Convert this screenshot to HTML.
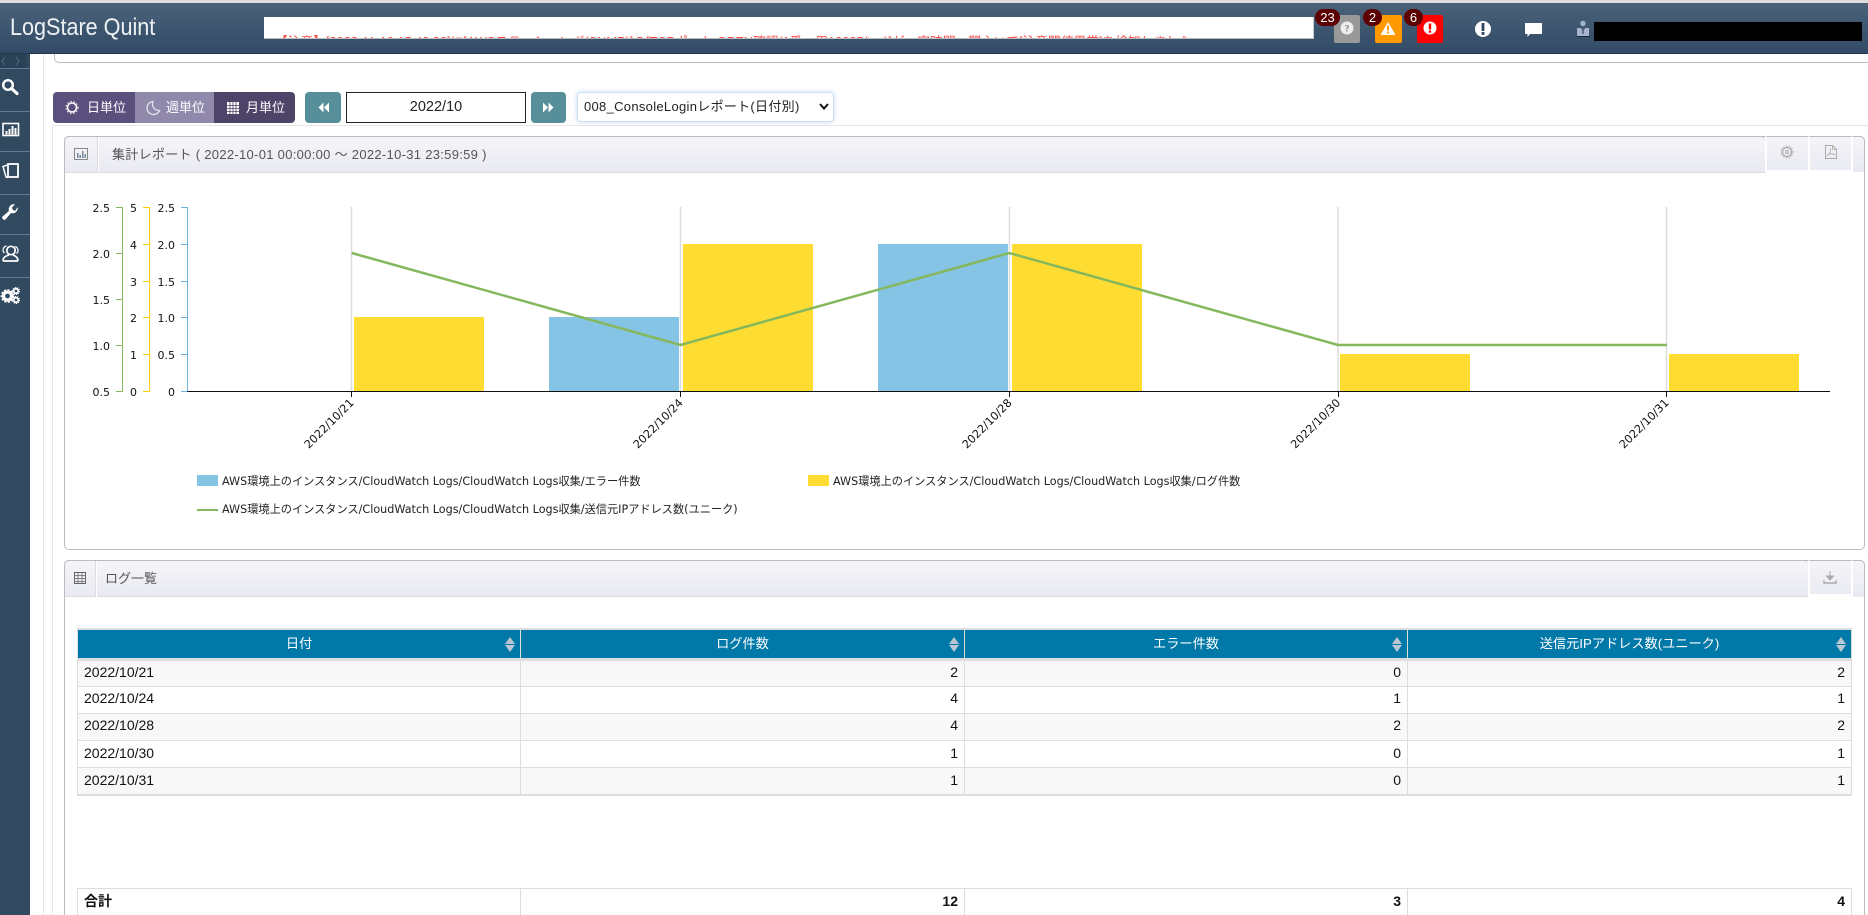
<!DOCTYPE html>
<html lang="ja"><head><meta charset="utf-8"><title>LogStare Quint</title>
<style>
html,body{margin:0;padding:0;width:1868px;height:915px;overflow:hidden;background:#fff}
body{position:relative;font-family:"Liberation Sans","Noto Sans CJK JP",sans-serif;font-size:13px;color:#222}
.a{position:absolute;box-sizing:border-box}
.hdr{left:0;top:0;width:1868px;height:54px;background:linear-gradient(#4a6279,#324b67);border-top:3px solid #ddd;border-bottom:1px solid #22384e}
.logo{left:10px;top:13px;font-size:24px;color:#eef2f5;line-height:30px;white-space:nowrap;transform:scaleX(.9);transform-origin:left center}
.tick{left:264px;top:17px;width:1050px;height:22px;background:#fff;border-bottom:1px solid #bbb;border-right:1px solid #ccc;overflow:hidden}
.tick span{position:absolute;left:11px;top:15px;font-size:12.75px;color:#f44;white-space:nowrap;line-height:20px}
.sq{top:15px;height:28px;border-radius:2px}
.bd{top:9px;height:17px;border-radius:9px;background:#5c0000;color:#fff;font-size:13px;line-height:17px;text-align:center}
.side{left:0;top:54px;width:30px;height:861px;background:#324a60}
.sl{left:0;width:30px;height:1px;background:#5d7c99}
.seg{top:92px;height:31px;color:#fff;font-size:13px;line-height:31px;white-space:nowrap}
.tb{top:92px;height:31px;width:36px;background:#568e99;border-radius:4px}
.pan{background:#fff;border:1px solid #bbb;border-radius:5px}
.ph{left:64px;background:linear-gradient(#f5f5f9,#e9e9f2);border-bottom:1px solid #ddd;border-top:1px solid #bbb;border-left:1px solid #bbb;border-radius:5px 5px 0 0}
.cell{background:linear-gradient(#f3f3f8,#ebebf3);border:2px solid #fff;border-top:1px solid #bbb}
svg text{font-family:"DejaVu Sans","Noto Sans CJK JP",sans-serif}
table{position:absolute;left:77px;width:1774px;border-collapse:collapse;table-layout:fixed;font-size:14px;color:#111}
td,th{box-sizing:border-box;padding:0 6px 3px;border:1px solid #ddd;overflow:hidden;white-space:nowrap}
th{background:#0078a8;color:#fff;font-weight:normal;font-size:13.2px;height:30px;position:relative;border-bottom:3px solid #ddd;border-top:2px solid #ddd;border-left-color:#ddd}
td{height:27.2px;text-align:right}
td:first-child{text-align:left}
tr.o td{background:#f8f8f8}
th i{position:absolute;right:5px;top:7px;width:0;height:0;border-left:5px solid transparent;border-right:5px solid transparent;border-bottom:7px solid #b9c7d2}
th b{position:absolute;right:5px;top:15px;width:0;height:0;border-left:5px solid transparent;border-right:5px solid transparent;border-top:7px solid #b9c7d2}
</style></head><body>

<!-- page frame -->
<div class="a" style="left:43px;top:54px;width:1px;height:861px;background:#e4e4e4"></div>
<div class="a" style="left:54px;top:40px;width:1830px;height:23px;border:1px solid #bbb;border-radius:5px"></div>
<div class="a" style="left:52px;top:125px;width:1830px;height:800px;border:1px solid #e6e6e6;border-right:0"></div>

<!-- header -->
<div class="a hdr"></div>
<div class="a logo">LogStare Quint</div>
<div class="a tick"><span>【注意】[2022-11-10 15:43:38]に[AWSステーションボ(SNMP)]の[TCPポート OPEN確認(1番　用10025/tcp)]が一定時間　開主いて[注意閾値異常]を検知しました</span></div>

<div class="a sq" style="left:1334px;width:26px;background:#999"></div>
<div class="a sq" style="left:1375px;width:27px;background:#f90"></div>
<div class="a sq" style="left:1417px;width:26px;background:#f00"></div>
<div class="a bd" style="left:1315px;width:25px">23</div>
<div class="a bd" style="left:1363px;width:19px">2</div>
<div class="a bd" style="left:1404px;width:19px">6</div>
<svg class="a" style="left:1300px;top:0" width="320" height="54" viewBox="0 0 320 54">
<circle cx="47" cy="28" r="6.5" fill="#eee"/><text x="47" y="31.5" font-size="9" font-weight="bold" text-anchor="middle" fill="#999">?</text>
<path d="M88 22l7.500 13h-15z" fill="#fff"/><rect x="87" y="25.500" width="2" height="5" fill="#f90"/><rect x="87" y="31.500" width="2" height="2" fill="#f90"/>
<circle cx="130" cy="28" r="6.5" fill="#fff"/><rect x="128.800" y="23.500" width="2.400" height="6" fill="#f00"/><rect x="128.800" y="30.500" width="2.400" height="2.200" fill="#f00"/>
<circle cx="183" cy="29" r="8" fill="#fff"/><rect x="181.600" y="23" width="2.800" height="8" fill="#2c4560"/><rect x="181.600" y="32" width="2.800" height="2.800" fill="#2c4560"/>
<path d="M225 23h17v11h-12l-2.500 3v-3h-2.500z" fill="#fff"/>
<circle cx="283" cy="23.500" r="2.700" fill="#a9b5cc"/><path d="M277 36v-8h4l2 5 2-5h4v8z" fill="#a9b5cc"/><path d="M282.500 28h1l.7 5-1.200 1.500-1.200-1.500z" fill="#5d6d85"/><rect x="277" y="36" width="13" height="1" fill="#1a2533"/>
<path d="M562 28h5l-2.500 3z" fill="#9fb0c0"/>
</svg>
<div class="a" style="left:1594px;top:22px;width:268px;height:19px;background:#000"></div>

<!-- sidebar -->
<div class="a side"></div>
<div class="a" style="left:0;top:54px;width:27px;height:14px;background:#2c4257"></div>
<svg class="a" style="left:0;top:54px" width="30" height="14"><path d="M5 3L2 7l3 4M16 3l3 4-3 4" fill="none" stroke="#4f6b85" stroke-width="1"/></svg>
<div class="a sl" style="top:68px"></div><div class="a sl" style="top:111px"></div><div class="a sl" style="top:151px"></div><div class="a sl" style="top:194px"></div><div class="a sl" style="top:234px"></div><div class="a sl" style="top:277px"></div>
<svg class="a" style="left:0;top:54px" width="30" height="260" viewBox="0 54 30 260">
<g fill="none" stroke="#fff">
<circle cx="8" cy="85" r="4.800" stroke-width="2.400"/><path d="M11.500 88.500l5.500 5" stroke-width="3.200" stroke-linecap="round"/>
<rect x="3" y="123.500" width="15.500" height="12" stroke-width="1.600"/>
<rect x="8" y="164" width="10" height="13" stroke-width="1.800"/><path d="M7.500 165l-4.500 1.500 3 10.500 2 .5" stroke-width="1.500"/>
<circle cx="11" cy="250.500" r="4.200" stroke-width="1.700"/><path d="M3 261c0-4 3-5 6-6M18 261c0-4-3-5-5-6M3 261h15" stroke-width="1.700"/><path d="M15 246.500a4 4 0 0 1 1.500 7" stroke-width="1.200"/><path d="M6.500 246a4 4 0 0 0-2 7" stroke-width="1.200"/>
</g>
<path d="M5.500 131h2v3.500h-2zM8.500 129h2v5.500h-2zM11.500 126h2v8.500h-2zM14.500 128h2v6.500h-2z" fill="#fff"/>
<path d="M17.500 207a5 5 0 0 1-6.500 6l-5.500 6.500a2.200 2.200 0 0 1-3-3l6.500-5.500a5 5 0 0 1 6-6.500l-3 3 .8 2.500 2.500.8z" fill="#fff"/>
<circle cx="7.500" cy="296" r="4" fill="none" stroke="#fff" stroke-width="3.200"/><circle cx="7.500" cy="296" r="6" fill="none" stroke="#fff" stroke-width="1.800" stroke-dasharray="2 1.500"/>
<circle cx="16" cy="291" r="2.300" fill="none" stroke="#fff" stroke-width="1.800"/><circle cx="16" cy="291" r="3.500" fill="none" stroke="#fff" stroke-width="1" stroke-dasharray="1.200 1"/>
<circle cx="16" cy="300" r="2.300" fill="none" stroke="#fff" stroke-width="1.800"/><circle cx="16" cy="300" r="3.500" fill="none" stroke="#fff" stroke-width="1" stroke-dasharray="1.200 1"/>
</svg>

<!-- toolbar -->
<div class="a seg" style="left:53px;width:82px;background:#5b4f7e;border-radius:4px 0 0 4px;padding-left:34px">日単位</div>
<div class="a seg" style="left:135px;width:79px;background:#9189ab;padding-left:31px">週単位</div>
<div class="a seg" style="left:214px;width:81px;background:#4e4368;border-radius:0 4px 4px 0;padding-left:32px">月単位</div>
<svg class="a" style="left:53px;top:92px" width="242" height="31" viewBox="53 92 242 31">
<circle cx="72" cy="107.500" r="4.500" fill="none" stroke="#fff" stroke-width="1.500"/>
<circle cx="72" cy="107.500" r="6" fill="none" stroke="#fff" stroke-width="1" stroke-dasharray="1.500 1.800"/>
<path d="M153 101.500a6.500 6.500 0 1 0 6.500 9 6.500 6.500 0 0 1-6.500-9z" fill="none" stroke="#e8e6ee" stroke-width="1.200"/>
<rect x="227" y="102" width="12" height="12" fill="#fff"/><path d="M227 105.500h12M227 108.500h12M227 111.500h12M230 102v12M233 102v12M236 102v12" stroke="#4e4368" stroke-width=".8"/>
</svg>
<div class="a tb" style="left:305px"></div>
<svg class="a" style="left:305px;top:92px" width="36" height="31"><path d="M18.500 10.500v10l-5-5zM24 10.500v10l-5-5z" fill="#fff"/></svg>
<div class="a" style="left:346px;top:92px;width:180px;height:31px;border:1px solid #222;text-align:center;line-height:29px;font-size:14.5px;color:#222">2022/10</div>
<div class="a tb" style="left:531px;width:35px"></div>
<svg class="a" style="left:531px;top:92px" width="35" height="31"><path d="M12 10.500v10l5-5zM17.500 10.500v10l5-5z" fill="#fff"/></svg>
<div class="a" style="left:577px;top:92px;width:257px;height:30px;background:#fff;border:1px solid #cfe0ee;border-radius:4px;box-shadow:0 0 5px #bcd8f0;line-height:28px;padding-left:6px;font-size:13px;letter-spacing:.3px;color:#222;white-space:nowrap">008_ConsoleLoginレポート(日付別)</div>
<svg class="a" style="left:818px;top:102px" width="12" height="10"><path d="M2 2l4 4.500L10 2" fill="none" stroke="#111" stroke-width="2"/></svg>

<!-- report panel -->
<div class="a pan" style="left:64px;top:136px;width:1801px;height:414px"></div>
<div class="a ph" style="top:136px;width:1702px;height:37px"></div>
<div class="a" style="left:1852px;top:136px;width:13px;height:36px;background:linear-gradient(#f5f5f9,#e9e9f2);border-top:1px solid #bbb;border-right:1px solid #bbb;border-radius:0 5px 0 0;box-sizing:border-box"></div>
<div class="a" style="left:97px;top:137px;width:2px;height:35px;background:linear-gradient(90deg,#ddd 50%,#fff 50%)"></div>
<svg class="a" style="left:74px;top:147px" width="14" height="14"><rect x=".5" y="1.500" width="13" height="11" fill="none" stroke="#888"/><path d="M3 6h1.500v5H3zM5.500 8H7v3H5.500zM8 4h1.500v7H8zM10.500 7H12v4h-1.500z" fill="#789"/></svg>
<div class="a" style="left:112px;top:146px;font-size:13px;line-height:18px;color:#555;white-space:nowrap;letter-spacing:.3px">集計レポート ( 2022-10-01 00:00:00 ～ 2022-10-31 23:59:59 )</div>
<div class="a cell" style="left:1765px;top:136px;width:45px;height:36px"></div>
<div class="a cell" style="left:1808px;top:136px;width:45px;height:36px"></div>
<svg class="a" style="left:1780px;top:145px" width="14" height="14"><circle cx="7" cy="7" r="4.500" fill="none" stroke="#a5a5a8" stroke-width="1.200"/><circle cx="7" cy="7" r="6" fill="none" stroke="#aaa" stroke-width="1" stroke-dasharray="1.500 1.500"/><circle cx="7" cy="7" r="1.500" fill="none" stroke="#aaa"/></svg>
<svg class="a" style="left:1825px;top:145px" width="12" height="14"><path d="M.5.500h7l4 4v9H.500z" fill="none" stroke="#aaa"/><path d="M7.500.5v4h4M2 11c3-2 4-5 3.500-8M3 9.500c2-1 5-1 7 .5" fill="none" stroke="#b5aaa0" stroke-width=".8"/></svg>

<!-- chart -->
<svg class="a" style="left:0;top:0" width="1868" height="540" viewBox="0 0 1868 540">
<g stroke="#ddd" stroke-width="1.500"><path d="M351.500 207V391M680.500 207V391M1009.500 207V391M1338 207V391M1666.500 207V391"/></g>
<g fill="#85c4e4"><rect x="549" y="317" width="130" height="74"/><rect x="878" y="244" width="130" height="147"/></g>
<g fill="#fedc32"><rect x="354" y="317" width="130" height="74"/><rect x="683" y="244" width="130" height="147"/><rect x="1012" y="244" width="130" height="147"/><rect x="1340" y="354" width="130" height="37"/><rect x="1669" y="354" width="130" height="37"/></g>
<polyline points="351.700,253 680.500,345 1009.300,253 1338,345 1666.900,345" fill="none" stroke="#85b85d" stroke-width="2.500"/>
<path d="M187 391.500H1830M351.500 391v6M680.500 391v6M1009.500 391v6M1338.500 391v6M1666.500 391v6" stroke="#111" stroke-width="1" fill="none"/>
<path d="M116 207.500h6.500V391.500H116M116 253.500h6.500M116 299.500h6.500M116 345.500h6.500" fill="none" stroke="#85b85d"/>
<path d="M143 207.500h6.500V391.500H143M143 244.500h6.500M143 281.500h6.500M143 317.500h6.500M143 354.500h6.500" fill="none" stroke="#fc0"/>
<path d="M181 207.500h6.500V391M181 244.500h6.500M181 281.500h6.500M181 317.500h6.500M181 354.500h6.500M181 391.500h6.500" fill="none" stroke="#6cb3dd"/>
<g font-size="11" fill="#111" text-anchor="end">
<text x="110" y="212">2.5</text><text x="110" y="258">2.0</text><text x="110" y="304">1.5</text><text x="110" y="350">1.0</text><text x="110" y="396">0.5</text>
<text x="137" y="212">5</text><text x="137" y="249">4</text><text x="137" y="286">3</text><text x="137" y="322">2</text><text x="137" y="359">1</text><text x="137" y="396">0</text>
<text x="175" y="212">2.5</text><text x="175" y="249">2.0</text><text x="175" y="286">1.5</text><text x="175" y="322">1.0</text><text x="175" y="359">0.5</text><text x="175" y="396">0</text>
<text transform="translate(354.500,403.500) rotate(-45)" font-size="11.2">2022/10/21</text>
<text transform="translate(683.500,403.500) rotate(-45)" font-size="11.2">2022/10/24</text>
<text transform="translate(1012.500,403.500) rotate(-45)" font-size="11.2">2022/10/28</text>
<text transform="translate(1341,403.500) rotate(-45)" font-size="11.2">2022/10/30</text>
<text transform="translate(1669.500,403.500) rotate(-45)" font-size="11.2">2022/10/31</text>
</g>
<rect x="197" y="475" width="21" height="11" fill="#85c4e4"/>
<rect x="808" y="475" width="21" height="11" fill="#fedc32"/>
<rect x="197" y="509" width="21" height="2" fill="#85b85d"/>
<g font-size="11.2" fill="#222">
<text x="222" y="485">AWS環境上のインスタンス/CloudWatch Logs/CloudWatch Logs収集/エラー件数</text>
<text x="833" y="485">AWS環境上のインスタンス/CloudWatch Logs/CloudWatch Logs収集/ログ件数</text>
<text x="222" y="513">AWS環境上のインスタンス/CloudWatch Logs/CloudWatch Logs収集/送信元IPアドレス数(ユニーク)</text>
</g>
</svg>

<!-- log panel -->
<div class="a pan" style="left:64px;top:560px;width:1801px;height:400px"></div>
<div class="a ph" style="top:560px;width:1744px;height:37px"></div>
<div class="a" style="left:1852px;top:560px;width:13px;height:37px;background:linear-gradient(#f5f5f9,#e9e9f2);border-top:1px solid #bbb;border-right:1px solid #bbb;border-radius:0 5px 0 0;box-sizing:border-box"></div>
<div class="a" style="left:95px;top:561px;width:2px;height:36px;background:linear-gradient(90deg,#ddd 50%,#fff 50%)"></div>
<svg class="a" style="left:74px;top:572px" width="12" height="12"><rect x=".5" y=".5" width="11" height="11" fill="none" stroke="#666"/><path d="M0 3.500h12M0 6.500h12M0 9.500h12M4 0v12M8 0v12" stroke="#666" stroke-width=".8"/></svg>
<div class="a" style="left:105px;top:570px;font-size:13px;line-height:18px;color:#555">ログ一覧</div>
<div class="a cell" style="left:1808px;top:560px;width:45px;height:36px"></div>
<svg class="a" style="left:1823px;top:571px" width="14" height="13"><path d="M7 0v6M3.500 5L7 9l3.500-4z" fill="#aaa" stroke="#aaa"/><path d="M1 9.500v2.500h12V9.500" fill="none" stroke="#aaa" stroke-width="1.500"/></svg>

<table style="top:628px">
<colgroup><col style="width:443px"><col style="width:444px"><col style="width:443px"><col style="width:444px"></colgroup>
<tr><th>日付<i></i><b></b></th><th>ログ件数<i></i><b></b></th><th>エラー件数<i></i><b></b></th><th>送信元IPアドレス数(ユニーク)<i></i><b></b></th></tr>
<tr class="o"><td>2022/10/21</td><td>2</td><td>0</td><td>2</td></tr>
<tr><td>2022/10/24</td><td>4</td><td>1</td><td>1</td></tr>
<tr class="o"><td>2022/10/28</td><td>4</td><td>2</td><td>2</td></tr>
<tr><td>2022/10/30</td><td>1</td><td>0</td><td>1</td></tr>
<tr class="o"><td style="border-bottom:2px solid #ddd">2022/10/31</td><td style="border-bottom:2px solid #ddd">1</td><td style="border-bottom:2px solid #ddd">0</td><td style="border-bottom:2px solid #ddd">1</td></tr>
</table>
<table style="top:888px">
<colgroup><col style="width:443px"><col style="width:444px"><col style="width:443px"><col style="width:444px"></colgroup>
<tr style="font-weight:bold"><td>合計</td><td>12</td><td>3</td><td>4</td></tr>
</table>
</body></html>
